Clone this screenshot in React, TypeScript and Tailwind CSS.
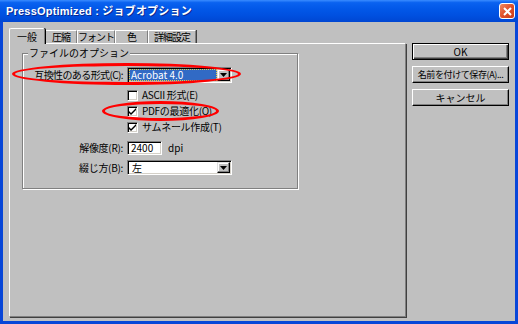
import React from "react";

const font = { fontFamily: '"Noto Sans CJK JP", "Liberation Sans", sans-serif' };

const sunken =
  "border border-t-[#808080] border-l-[#808080] border-b-white border-r-white shadow-[inset_1px_1px_0_#000,inset_-1px_-1px_0_#d4d0c8]";

function Arrow() {
  return (
    <div className="w-[13px] h-full bg-[#c0c0c0] border border-t-[#dfdfdf] border-l-[#dfdfdf] border-b-black border-r-black shadow-[inset_-1px_-1px_0_#808080,inset_1px_1px_0_#fff] flex items-center justify-center">
      <svg width="7" height="4" viewBox="0 0 7 4">
        <path d="M0 0h7L3.5 4z" fill="#000" />
      </svg>
    </div>
  );
}

function Check({ checked }: { checked?: boolean }) {
  return (
    <div className={`w-[11px] h-[11px] bg-white ${sunken} flex items-center justify-center`}>
      {checked && (
        <svg width="7" height="7" viewBox="0 0 7 7">
          <path d="M0 3l2 2 5-5v2l-5 5-2-2z" fill="#000" />
        </svg>
      )}
    </div>
  );
}

function Button({ children, def }: { children: React.ReactNode; def?: boolean }) {
  return (
    <div
      className={`w-[97px] h-[17px] bg-[#c0c0c0] flex items-center justify-center whitespace-nowrap text-[10px] leading-none text-black ${
        def
          ? "border border-black shadow-[inset_1px_1px_0_#fff,inset_-1px_-1px_0_#404040,inset_-2px_-2px_0_#808080]"
          : "border border-t-white border-l-white border-b-black border-r-black shadow-[inset_-1px_-1px_0_#808080]"
      }`}
    >
      {children}
    </div>
  );
}

export default function App() {
  return (
    <div className="relative w-[518px] h-[324px] flex flex-col bg-[#0846d8] overflow-hidden" style={font}>
      {/* Title bar */}
      <div className="h-[22px] flex items-center pl-[6px] pr-[3px] bg-[linear-gradient(180deg,#3a8cff_0%,#0a62f0_12%,#0258e8_40%,#0050e0_70%,#0046d2_100%)]">
        <span
          className="flex-1 text-white font-bold text-[11px] leading-none tracking-[0.2px] [text-shadow:1px_1px_0_#0a2a90]"
          style={{ fontFamily: '"Liberation Sans", "Noto Sans CJK JP", sans-serif' }}
        >
          PressOptimized : ジョブオプション
        </span>
        <div className="w-[16px] h-[16px] rounded-[3px] border border-white bg-[linear-gradient(135deg,#f08a62,#e0502a_50%,#c83c18)] flex items-center justify-center">
          <svg width="9" height="9" viewBox="0 0 9 9">
            <path d="M1 1l7 7M8 1L1 8" stroke="#fff" strokeWidth="2" />
          </svg>
        </div>
      </div>

      {/* Body */}
      <div className="flex-1 mx-[3px] mb-[3px] bg-[#c0c0c0] flex">
        {/* Left column */}
        <div className="pl-[6px] pt-[6px] flex flex-col">
          <div className="h-[15px] flex items-end text-[10px] leading-none text-black whitespace-nowrap">
            <div className="relative z-10 -mb-px w-[36px] h-[16px] bg-[#c0c0c0] border-t border-l border-white border-r border-r-[#808080] rounded-t-[2px] shadow-[1px_0_0_#000] flex items-center justify-center">
              一般
            </div>
            {[
              ["圧縮", 32],
              ["フォント", 38],
              ["色", 33],
              ["詳細設定", 48],
            ].map(([t, w]) => (
              <div
                key={t as string}
                className="h-[13px] bg-[#c0c0c0] border-t border-l border-white border-r border-r-[#808080] shadow-[1px_0_0_#404040] flex items-center justify-center tracking-[-1px]"
                style={{ width: w as number }}
              >
                {t}
              </div>
            ))}
          </div>
          {/* Panel */}
          <div className="w-[397px] h-[274px] border border-t-white border-l-white border-b-[#808080] border-r-[#808080] shadow-[1px_1px_0_#404040]">
            <div className="relative ml-[12px] mt-[9px] w-[276px] h-[136px] border border-[#808080] shadow-[1px_1px_0_#fff,inset_1px_1px_0_#fff]">
              <span className="absolute left-[5px] -top-[7px] px-[1px] bg-[#c0c0c0] text-[10px] leading-[12px] text-black whitespace-nowrap">
                ファイルのオプション
              </span>
              <div className="pt-[13px] flex flex-col text-[10px] leading-none text-black whitespace-nowrap">
                {/* Row 1 */}
                <div className="flex items-center h-[16px]">
                  <div className="w-[100px] text-right tracking-[-0.6px]">互換性のある形式(C):</div>
                  <div className={`ml-[4px] w-[105px] h-[16px] bg-white ${sunken} flex p-[1px]`}>
                    <div className="flex-1 bg-[#316ac5] outline-1 outline-dotted outline-[#e8d040] -outline-offset-1 flex items-center pl-[2px] text-white">
                      Acrobat 4.0
                    </div>
                    <Arrow />
                  </div>
                </div>
                {/* Checkboxes */}
                <div className="mt-[4px] flex flex-col pl-[104px]">
                  {[
                    ["ASCII 形式(E)", false],
                    ["PDFの最適化(O)", true],
                    ["サムネール作成(T)", true],
                  ].map(([t, c]) => (
                    <div key={t as string} className="h-[16px] flex items-center gap-[4px]">
                      <Check checked={c as boolean} />
                      <span className="tracking-[-0.3px]">{t}</span>
                    </div>
                  ))}
                </div>
                {/* Resolution */}
                <div className="mt-[6px] flex items-center h-[14px]">
                  <div className="w-[100px] text-right tracking-[-0.3px]">解像度(R):</div>
                  <div className={`ml-[4px] w-[35px] h-[14px] bg-white ${sunken} flex items-center pl-[3px]`}>2400</div>
                  <span className="ml-[6px]">dpi</span>
                </div>
                {/* Binding */}
                <div className="mt-[5px] flex items-center h-[15px]">
                  <div className="w-[100px] text-right tracking-[-0.3px]">綴じ方(B):</div>
                  <div className={`ml-[4px] w-[105px] h-[15px] bg-white ${sunken} flex p-[1px]`}>
                    <div className="flex-1 flex items-center pl-[3px]">左</div>
                    <Arrow />
                  </div>
                </div>
              </div>
            </div>
          </div>
        </div>
        {/* Right column */}
        <div className="ml-[6px] pt-[21px] flex flex-col gap-[6px]">
          <Button def>OK</Button>
          <Button>
            <span className="text-[9px] tracking-[-0.4px]">名前を付けて保存(A)...</span>
          </Button>
          <Button>キャンセル</Button>
        </div>
      </div>

      {/* Red annotation ellipses */}
      <div className="absolute left-[12px] top-[63px] w-[229px] h-[22px] rounded-[50%] border-[3px] border-[#ff0000]" />
      <div className="absolute left-[102px] top-[101px] w-[117px] h-[20px] rounded-[50%] border-[3px] border-[#ff0000]" />
    </div>
  );
}
